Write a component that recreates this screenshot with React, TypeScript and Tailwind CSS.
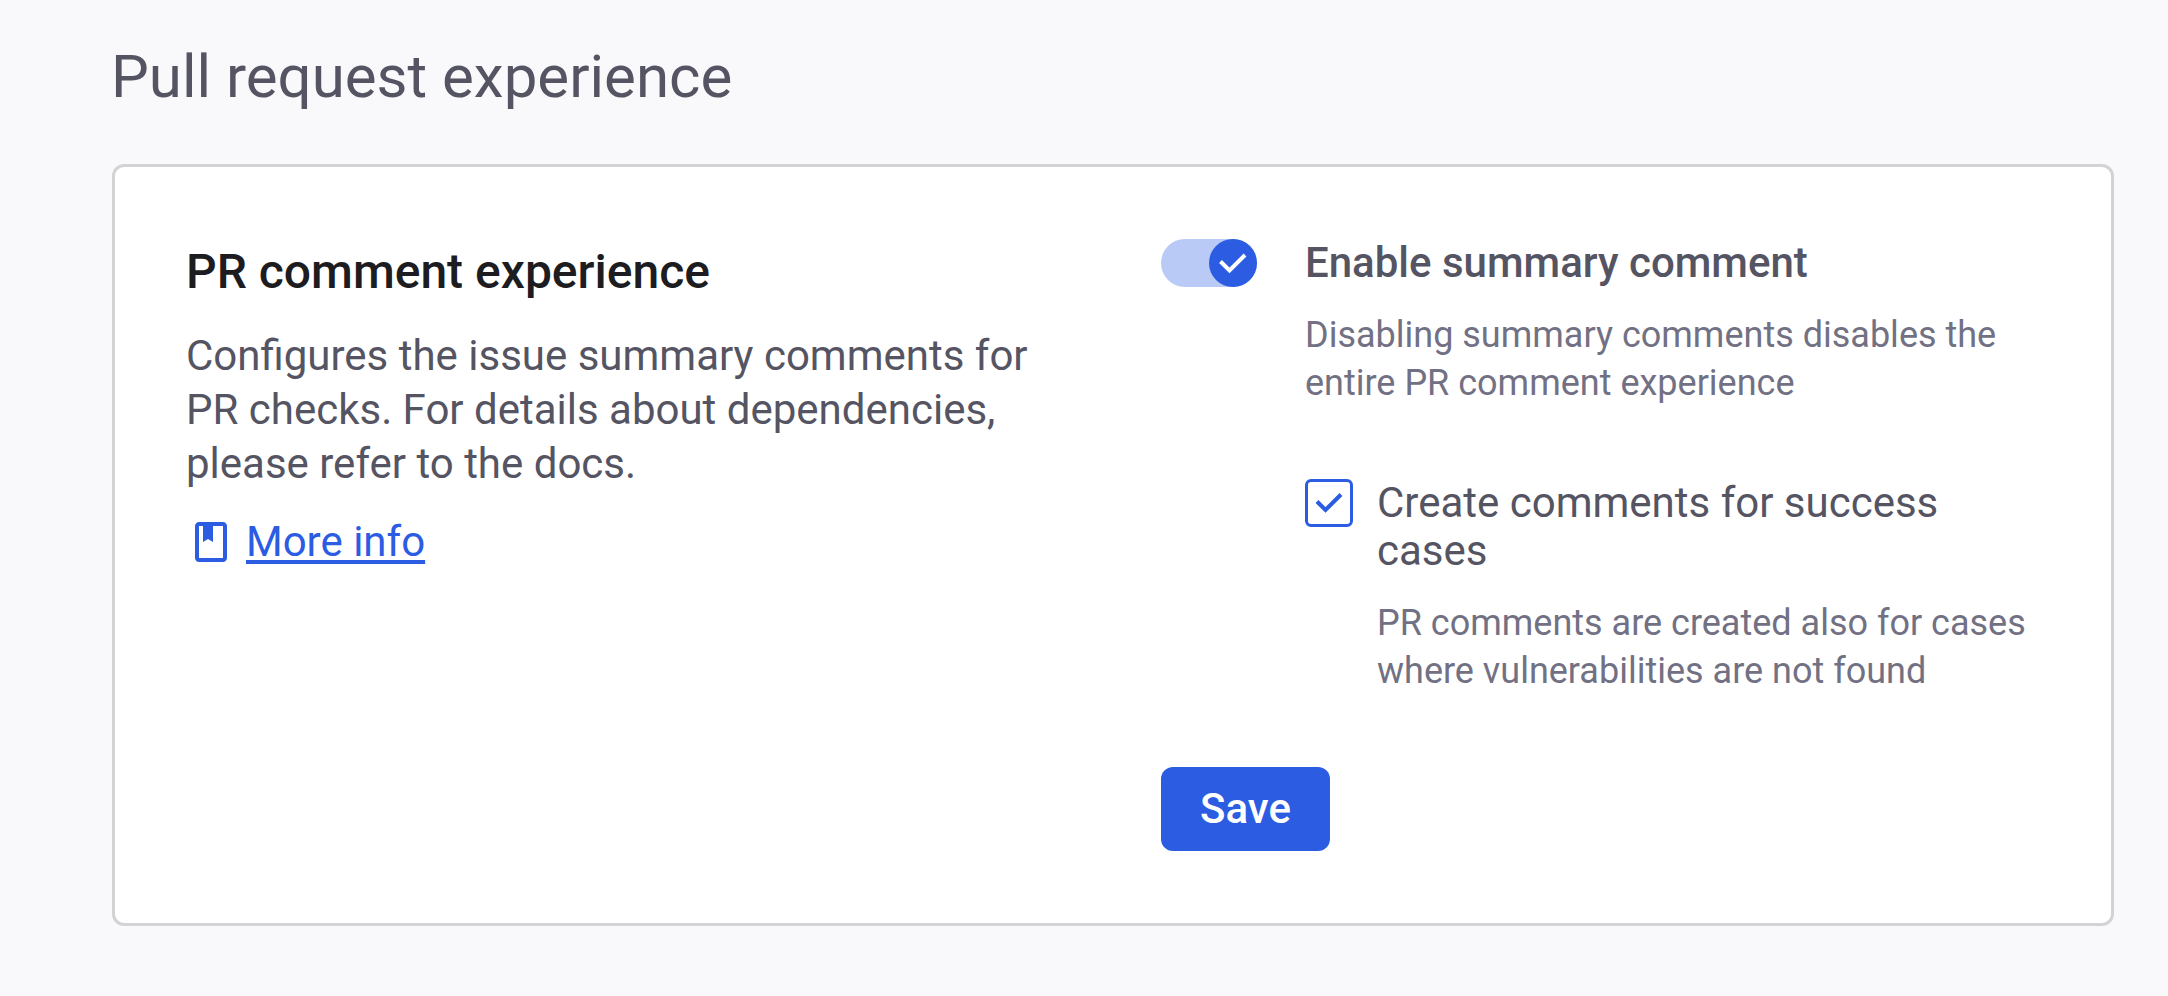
import React from "react";

function CardIntro() {
  return (
    <div className="w-[900px] shrink-0 pt-[3px]">
      <h2 className="-ml-px text-[48px] leading-[60px] font-medium text-[#1c1c21]">PR comment experience</h2>
      <p className="mt-[27px] -ml-px text-[42px] leading-[54px]">
        Configures the issue summary comments for<br />PR checks. For details about dependencies,<br />please refer to the docs.
      </p>
      <a className="mt-6 flex h-[54px] items-center gap-[11px] text-[42px] leading-[54px] text-[#2b5ce2]">
        <svg viewBox="0 0 24 24" className="size-12" fill="currentColor">
          <path d="M18 2H6c-1.1 0-2 .9-2 2v16c0 1.100.9 2 2 2h12c1.100 0 2-.9 2-2V4c0-1.100-.9-2-2-2zm0 18H6V4h2v8l2.500-1.500L13 12V4h5v16z" />
        </svg>
        <span className="underline decoration-4 underline-offset-4">More info</span>
      </a>
    </div>
  );
}

export default function App() {
  return (
    <main className="min-h-screen bg-[#f9f9fb] pt-[43px] pl-28 font-['Roboto',sans-serif] text-[#555463]">
      <h1 className="-ml-px text-[60px] leading-[68px]">Pull request experience</h1>
      <section className="mt-[53px] flex h-[762px] w-[2002px] rounded-xl border-3 border-[#d3d3d6] bg-white px-[72px] pt-[72px]">
        <CardIntro />
        <div className="ml-[74px] w-[878px]">
          <div className="flex">
            <div className="flex h-12 w-24 justify-end rounded-full bg-[#b9caf7]">
              <div className="flex size-12 items-center justify-center rounded-full bg-[#2b5ce2]">
                <svg viewBox="0 0 48 48" className="size-12" fill="none" stroke="white" strokeWidth="4"><path d="M11.500 22.500l9 9L36 16" /></svg>
              </div>
            </div>
            <div className="ml-12">
              <h3 className="text-[42px] leading-[48px] font-medium">Enable summary comment</h3>
              <p className="mt-6 text-[36px] leading-[48px] text-[#727184]">Disabling summary comments disables the<br />entire PR comment experience</p>
              <div className="mt-[72px] flex">
                <div className="flex size-12 items-center justify-center rounded-md border-3 border-[#2b5ce2]">
                  <svg viewBox="0 0 48 48" className="size-12 shrink-0" fill="none" stroke="#2b5ce2" strokeWidth="4"><path d="M12 22.500l8.500 8.500L36 15.500" /></svg>
                </div>
                <div className="ml-6">
                  <p className="text-[42px] leading-[48px]">Create comments for success<br />cases</p>
                  <p className="mt-6 text-[36px] leading-[48px] text-[#727184]">PR comments are created also for cases<br />where vulnerabilities are not found</p>
                </div>
              </div>
            </div>
          </div>
          <button className="mt-[72px] flex h-[84px] w-[169px] items-center justify-center rounded-xl bg-[#2b5ce2] pb-0.5 text-[42px] font-medium text-white">Save</button>
        </div>
      </section>
    </main>
  );
}
